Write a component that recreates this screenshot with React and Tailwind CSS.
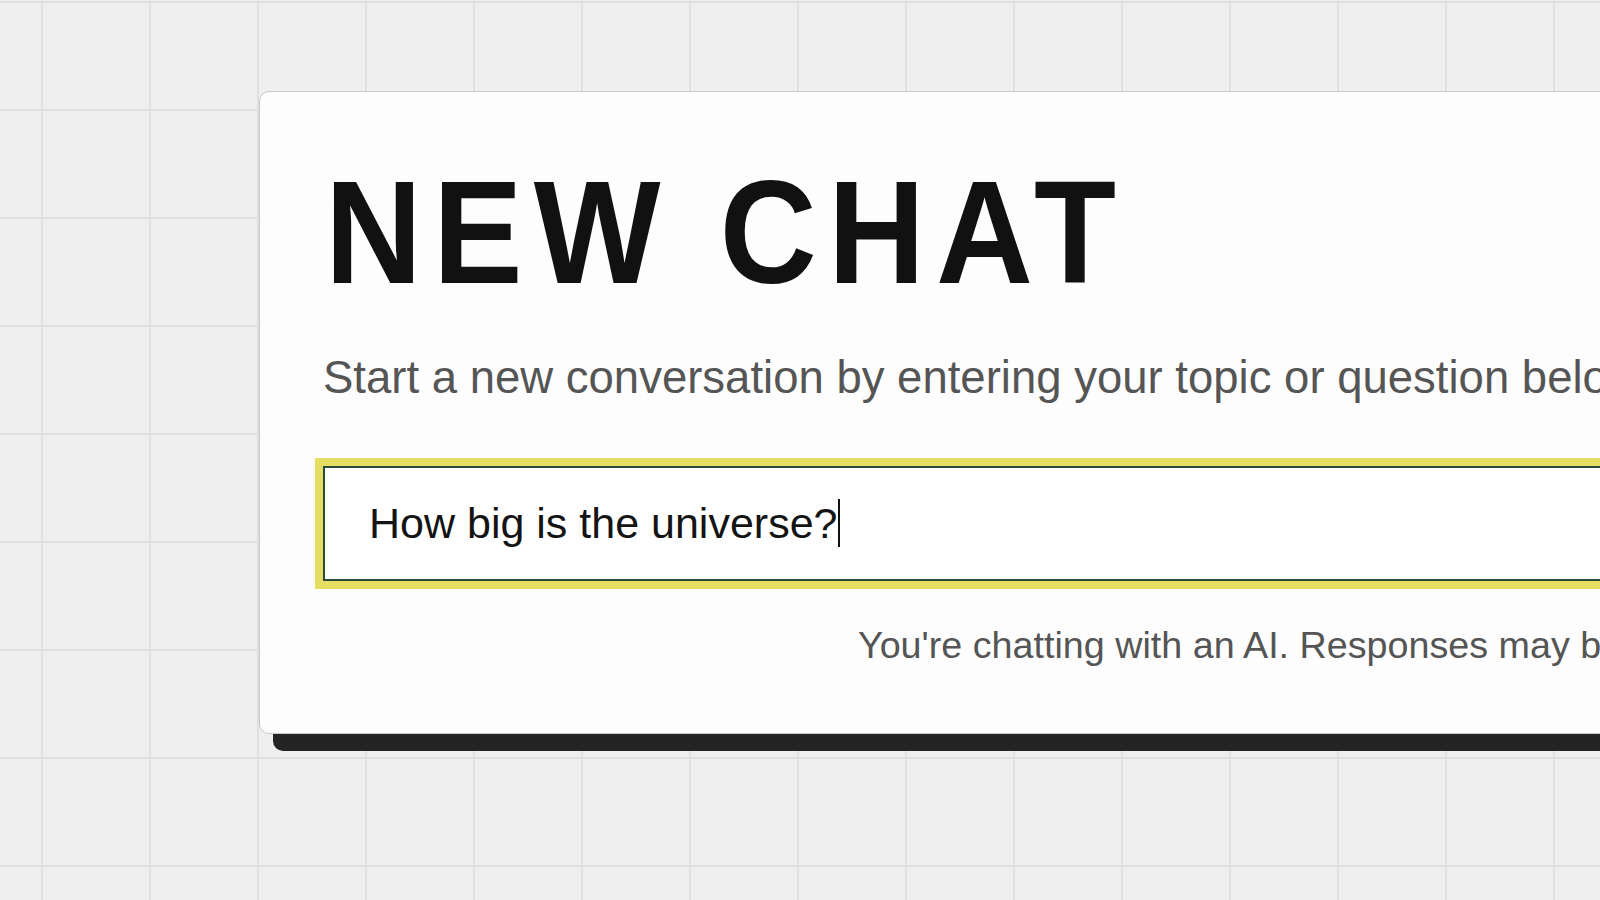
export default function App() {
  return (
    <div className="h-[900px] w-[1600px] overflow-hidden bg-[#efefef] bg-[linear-gradient(to_right,#e0e0e0_2px,transparent_2px),linear-gradient(to_bottom,#e0e0e0_2px,transparent_2px)] bg-[size:108px_108px] bg-[position:41px_1px] pt-[91px] pl-[259px] font-['Liberation_Sans',Arial,sans-serif]">
      {/* Chat card */}
      <div className="w-[1622px] rounded-[10px] border border-[#c9c9c9] bg-[#fdfdfd] pt-[68px] pr-[63px] pb-[69px] pl-[63px] shadow-[14px_17px_0_#242424]">
        <h1 className="ml-[2px] origin-left scale-x-[0.92] text-[146px] font-bold leading-none tracking-[12px] text-[#111] whitespace-nowrap">
          NEW CHAT
        </h1>

        <p className="mt-[49px] text-[45.5px] leading-none text-[#555] whitespace-nowrap">
          Start a new conversation by entering your topic or question below.
        </p>

        {/* Prompt input */}
        <div className="mt-[65px] flex h-[115px] items-center border-2 border-[#2b4a3c] bg-white pl-[44px] outline-[8px] outline-solid outline-[#e6dd63]">
          <span className="text-[43px] leading-none text-[#141414] whitespace-nowrap">How big is the universe?</span>
          <span className="ml-[1px] h-[48px] w-[2px] bg-[#111]"></span>
        </div>

        <p className="mt-[46px] text-right text-[37.7px] leading-none text-[#555] whitespace-nowrap">
          You're chatting with an AI. Responses may be inaccurate.
        </p>
      </div>
    </div>
  );
}
